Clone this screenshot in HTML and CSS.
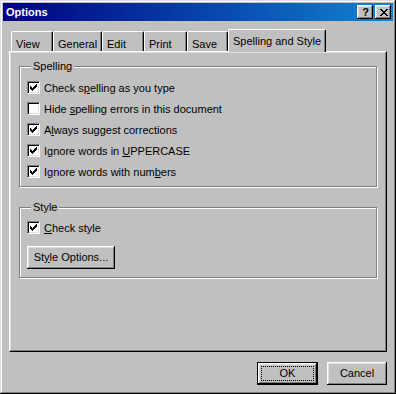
FILE: index.html
```html
<!DOCTYPE html>
<html>
<head>
<meta charset="utf-8">
<link rel="stylesheet" href="styles.css">
</head>
<body>
<div class="window">
  <div class="titlebar">
    <span class="title">Options</span>
    <div class="title-buttons">
      <span class="tbtn help">?</span>
      <span class="tbtn close"><svg width="8" height="7" viewBox="0 0 8 7" shape-rendering="crispEdges"><path d="M0 0h2v1h-2zM6 0h2v1h-2zM1 1h2v1h-2zM5 1h2v1h-2zM2 2h4v1h-4zM3 3h2v1h-2zM2 4h4v1h-4zM1 5h2v1h-2zM5 5h2v1h-2zM0 6h2v1h-2zM6 6h2v1h-2z" fill="#000"/></svg></span>
    </div>
  </div>
  <div class="body">
    <div class="tabs">
      <div class="tab w-view">View</div>
      <div class="tab w-general">General</div>
      <div class="tab w-edit">Edit</div>
      <div class="tab w-print">Print</div>
      <div class="tab w-save">Save</div>
      <div class="tab tab-active w-spell">Spelling and Style</div>
    </div>
    <div class="panel">
      <fieldset class="group group-spelling">
        <legend>Spelling</legend>
        <div class="row"><span class="cb checked"></span><span>Check s<u>p</u>elling as you type</span></div>
        <div class="row"><span class="cb"></span><span>Hide <u>s</u>pelling errors in this document</span></div>
        <div class="row"><span class="cb checked"></span><span>A<u>l</u>ways suggest corrections</span></div>
        <div class="row"><span class="cb checked"></span><span>Ignore words in <u>U</u>PPERCASE</span></div>
        <div class="row"><span class="cb checked"></span><span>Ignore words with num<u>b</u>ers</span></div>
      </fieldset>
      <fieldset class="group group-style">
        <legend>Style</legend>
        <div class="row"><span class="cb checked"></span><span><u>C</u>heck style</span></div>
        <div class="btn btn-style">St<u>y</u>le Options...</div>
      </fieldset>
    </div>
    <div class="actions">
      <div class="btn btn-default"><span class="focus">OK</span></div>
      <div class="btn btn-cancel">Cancel</div>
    </div>
  </div>
</div>
</body>
</html>
```
FILE: styles.css
```css
html, body {
  margin: 0;
  padding: 0;
  background: #c0c0c0;
}
body {
  font-family: "Liberation Sans", Arial, sans-serif;
  font-size: 11px;
  line-height: 13px;
  color: #000;
}
u { text-decoration: underline; text-underline-offset: 1px; }

.window {
  width: 396px;
  height: 394px;
  box-sizing: border-box;
  padding: 3px;
  background: #c0c0c0;
  box-shadow: inset -1px -1px 0 #000, inset 1px 1px 0 #dfdfdf, inset -2px -2px 0 #808080, inset 2px 2px 0 #fff;
  display: flex;
  flex-direction: column;
}

.titlebar {
  height: 18px;
  background: linear-gradient(to right, #000080, #1084d0);
  display: flex;
  align-items: center;
  justify-content: space-between;
  padding: 0 2px 0 3px;
}
.title {
  color: #fff;
  font-weight: bold;
  font-size: 11px;
  letter-spacing: 0;
}
.title-buttons {
  display: flex;
  gap: 2px;
}
.tbtn {
  width: 16px;
  height: 14px;
  box-sizing: border-box;
  background: #c0c0c0;
  box-shadow: inset -1px -1px 0 #000, inset 1px 1px 0 #fff, inset -2px -2px 0 #808080, inset 2px 2px 0 #dfdfdf;
  display: flex;
  align-items: center;
  justify-content: center;
}
.help {
  font-weight: bold;
  font-size: 11px;
  line-height: 14px;
  padding-left: 1px;
}
.close svg { display: block; margin-left: 1px; }

.body {
  flex: 1;
  display: flex;
  flex-direction: column;
  padding: 8px 6px 6px 6px;
}

.tabs {
  height: 22px;
  display: flex;
  align-items: flex-end;
  padding-left: 2px;
}
.tab {
  height: 20px;
  box-sizing: border-box;
  border-top: 1px solid #fff;
  border-left: 1px solid #fff;
  border-right: 1px solid #000;
  border-radius: 2px 2px 0 0;
  box-shadow: inset -1px 0 0 #808080;
  padding: 6px 0 0 4px;
  white-space: nowrap;
}
.tab-active {
  height: 23px;
  margin-bottom: -1px;
  position: relative;
  z-index: 1;
  background: #c0c0c0;
  padding-top: 5px;
}
.w-view { width: 42px; }
.w-general { width: 49px; }
.w-edit { width: 42px; }
.w-print { width: 43px; }
.w-save { width: 41px; }
.w-spell { width: 98px; }

.panel {
  height: 301px;
  box-sizing: border-box;
  border-top: 1px solid #fff;
  border-left: 1px solid #fff;
  border-right: 1px solid #000;
  border-bottom: 1px solid #000;
  box-shadow: inset -1px -1px 0 #808080, inset 1px 1px 0 #dfdfdf;
  padding: 8px 8px 0 9px;
}

.group {
  margin: 0;
  border: 1px solid #808080;
  box-shadow: inset 1px 1px 0 #fff, 1px 1px 0 #fff;
  padding: 8px 7px 8px 7px;
  width: 358px;
  box-sizing: border-box;
}
.group legend {
  padding: 0 2px;
  margin-left: 4px;
  background: #c0c0c0;
  line-height: 13px;
}
.group-style {
  margin-top: 14px;
  padding-top: 7px;
}

.row {
  display: flex;
  align-items: center;
  gap: 4px;
  height: 13px;
  white-space: nowrap;
}
.row + .row { margin-top: 8px; }
.row span:last-child { position: relative; top: 1px; }

.cb {
  width: 13px;
  height: 13px;
  flex: none;
  box-sizing: border-box;
  background: #fff;
  border-top: 1px solid #808080;
  border-left: 1px solid #808080;
  border-right: 1px solid #fff;
  border-bottom: 1px solid #fff;
  box-shadow: inset 1px 1px 0 #000, inset -1px -1px 0 #dfdfdf;
}
.cb.checked {
  background: #fff url("data:image/svg+xml;utf8,<svg xmlns='http://www.w3.org/2000/svg' width='7' height='7' shape-rendering='crispEdges'><path d='M6 0h1v1h-1zM5 1h2v1h-2zM0 2h1v1h-1zM4 2h3v1h-3zM0 3h2v1h-2zM3 3h3v1h-3zM0 4h5v1h-5zM1 5h3v1h-3zM2 6h1v1h-1z' fill='black'/></svg>") no-repeat 2px 2px;
}

.btn {
  height: 23px;
  box-sizing: border-box;
  background: #c0c0c0;
  box-shadow: inset -1px -1px 0 #000, inset 1px 1px 0 #fff, inset -2px -2px 0 #808080, inset 2px 2px 0 #dfdfdf;
  display: flex;
  align-items: center;
  justify-content: center;
  white-space: nowrap;
}
.btn-style {
  width: 88px;
  margin-top: 12px;
}

.actions {
  margin-top: 10px;
  display: flex;
  justify-content: flex-end;
  gap: 9px;
}
.btn-default {
  width: 61px;
  border: 1px solid #000;
  position: relative;
}
.btn-default .focus {
  flex: 1;
  align-self: stretch;
  margin: 3px;
  border: 1px dotted #000;
  display: flex;
  align-items: center;
  justify-content: center;
}
.btn-cancel {
  width: 60px;
}
```
